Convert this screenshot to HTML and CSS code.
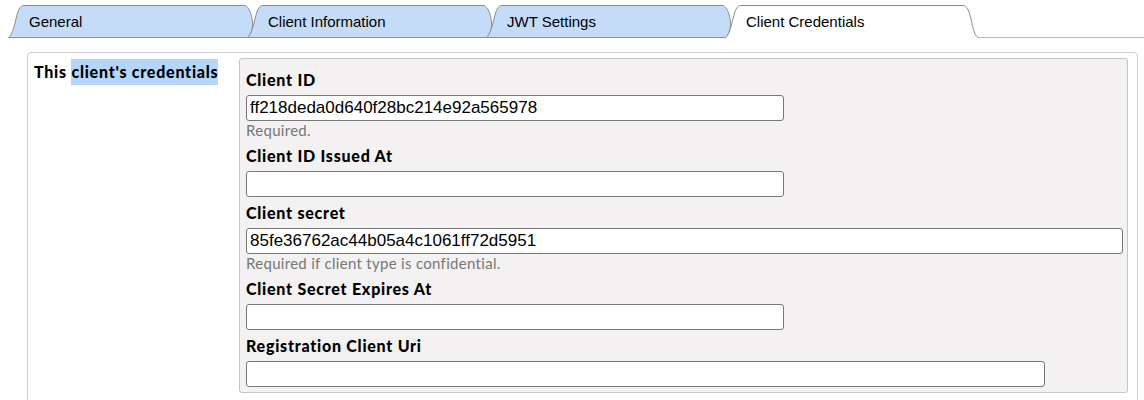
FILE: index.html
```html
<!DOCTYPE html>
<html>
<head>
<meta charset="utf-8">
<link rel="stylesheet" href="styles.css">
</head>
<body>
<div class="page">
  <div class="tabs">
    <div class="tab">
      <svg class="tab-shape" width="245" height="33" viewBox="0 0 245 33"><path d="M0.5,32.5 C4,30 6,22 8,14 C10,5 12,0.5 16,0.5 L237,0.5 C241,2 244,10 244.5,17 C245,25 242,30 240,32.5 Z" fill="#c4dcf7" stroke="#8e8e8e"/></svg>
      <span class="tab-label">General</span>
    </div>
    <div class="tab">
      <svg class="tab-shape" width="245" height="33" viewBox="0 0 245 33"><path d="M0.5,32.5 C4,30 6,22 8,14 C10,5 12,0.5 16,0.5 L237,0.5 C241,2 244,10 244.5,17 C245,25 242,30 240,32.5 Z" fill="#c4dcf7" stroke="#8e8e8e"/></svg>
      <span class="tab-label">Client Information</span>
    </div>
    <div class="tab">
      <svg class="tab-shape" width="245" height="33" viewBox="0 0 245 33"><path d="M0.5,32.5 C4,30 6,22 8,14 C10,5 12,0.5 16,0.5 L237,0.5 C241,2 244,10 244.5,17 C245,25 242,30 240,32.5 Z" fill="#c4dcf7" stroke="#8e8e8e"/></svg>
      <span class="tab-label">JWT Settings</span>
    </div>
    <div class="tab tab-active">
      <svg class="tab-shape" width="254" height="33" viewBox="0 0 254 33"><path d="M0.5,33 C4,30 6,22 8,14 C10,5 12,0.5 16,0.5 L238,0.5 C242,0.5 244,6 246,14 C248,24 250,32.5 254,32.5 L254,33 Z" fill="#ffffff" stroke="none"/><path d="M0.5,32.5 C4,30 6,22 8,14 C10,5 12,0.5 16,0.5 L238,0.5 C242,0.5 244,6 246,14 C248,24 250,32.5 254,32.5" fill="none" stroke="#8e8e8e"/></svg>
      <span class="tab-label">Client Credentials</span>
    </div>
    <div class="tab-rest"></div>
  </div>

  <div class="box">
    <div class="side">
      <span class="side-title">This <span class="sel">client's credentials</span></span>
    </div>
    <div class="panel">
      <div class="field">
        <div class="label">Client ID</div>
        <input class="input w-md" type="text" value="ff218deda0d640f28bc214e92a565978">
        <div class="help">Required.</div>
      </div>
      <div class="field">
        <div class="label">Client ID Issued At</div>
        <input class="input w-md" type="text" value="">
      </div>
      <div class="field">
        <div class="label">Client secret</div>
        <input class="input w-lg" type="text" value="85fe36762ac44b05a4c1061ff72d5951">
        <div class="help">Required if client type is confidential.</div>
      </div>
      <div class="field">
        <div class="label">Client Secret Expires At</div>
        <input class="input w-md" type="text" value="">
      </div>
      <div class="field">
        <div class="label">Registration Client Uri</div>
        <input class="input w-xl" type="text" value="">
      </div>
    </div>
  </div>
</div>
</body>
</html>
```

FILE: styles.css
```css
html, body {
  margin: 0;
  padding: 0;
  background: #ffffff;
}

.page {
  padding-top: 5px;
  width: 1144px;
  font-family: "Liberation Sans", Arial, sans-serif;
  color: #000;
}

.tabs {
  display: flex;
  height: 33px;
  padding-left: 8px;
}

.tab {
  position: relative;
  width: 245px;
  height: 33px;
  margin-right: -6px;
  flex: none;
}

.tab-active {
  width: 254px;
  margin-right: 0;
}

.tab-shape {
  position: absolute;
  left: 0;
  top: 0;
  display: block;
}

.tab-label {
  position: relative;
  display: block;
  padding-left: 21px;
  line-height: 33px;
  font-size: 15px;
}

.tab-rest {
  flex: 1;
  height: 32px;
  border-bottom: 1px solid #b8b8b8;
}

.box {
  display: flex;
  align-items: flex-start;
  margin-top: 14px;
  margin-left: 27px;
  width: 1109px;
  height: 360px;
  border: 1px solid #cfcfcf;
  border-radius: 4px;
}

.side {
  width: 205px;
  padding-left: 6px;
  padding-top: 6px;
  flex: none;
}

.side-title {
  font-family: Lato, "Open Sans", sans-serif;
  font-weight: 900;
  font-size: 16px;
  letter-spacing: 0.75px;
  line-height: 26px;
  display: inline-block;
  white-space: nowrap;
}

.sel {
  background: #b4d6fd;
  display: inline-block;
  line-height: 26px;
}

.panel {
  margin-top: 5px;
  width: 875px;
  padding: 11px 6px 5px 6px;
  background: #f3f1f2;
  border: 1px solid #c4c4c4;
  border-radius: 3px;
}

.field + .field {
  margin-top: 6px;
}

.label {
  font-family: Lato, "Open Sans", sans-serif;
  font-weight: 900;
  font-size: 16px;
  letter-spacing: 0.75px;
  line-height: 20px;
  margin-bottom: 5px;
}

.input {
  display: block;
  box-sizing: border-box;
  height: 26px;
  margin: 0;
  padding: 0 3px;
  border: 1px solid #777;
  border-radius: 3px;
  background: #fff;
  font-family: "Liberation Sans", Arial, sans-serif;
  font-size: 17px;
  color: #000;
}

.w-md { width: 538px; }
.w-lg { width: 877px; }
.w-xl { width: 799px; }

.help {
  font-family: Lato, "Open Sans", sans-serif;
  font-size: 15px;
  letter-spacing: 0.3px;
  line-height: 19px;
  color: #777;
}
```
